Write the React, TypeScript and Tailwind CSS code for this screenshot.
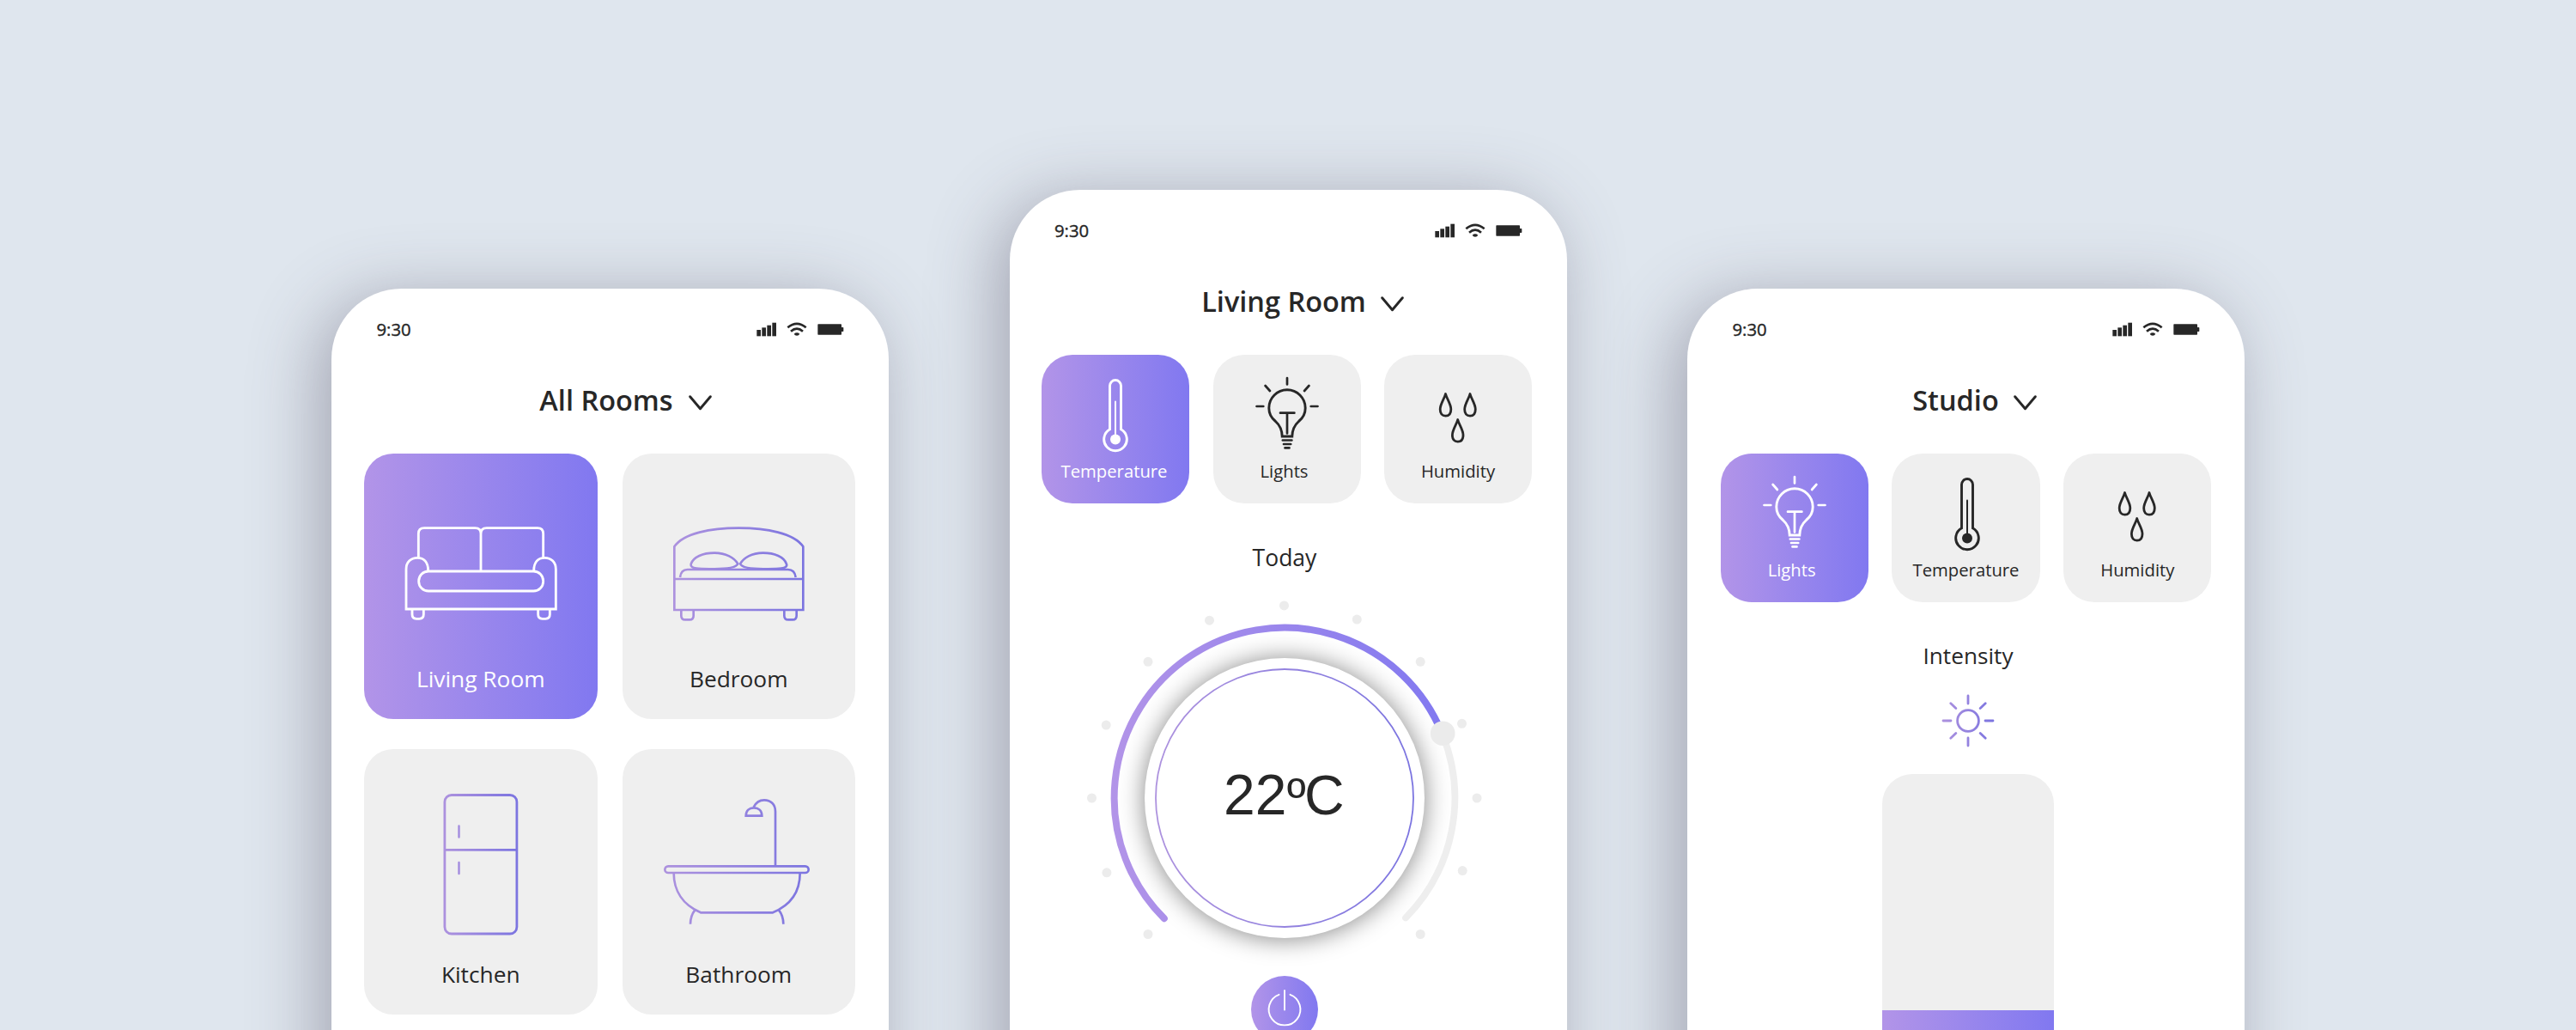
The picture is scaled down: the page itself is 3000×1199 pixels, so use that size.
import type { ReactNode } from "react";

const INK = "#272727";

function Gradient({ id, x1, x2, soft }: { id: string; x1: number; x2: number; soft?: boolean }) {
  return (
    <defs>
      <linearGradient id={id} gradientUnits="userSpaceOnUse" x1={x1} x2={x2} y1="0" y2="0">
        <stop offset="0" stopColor={soft ? "#ad92de" : "#b294e8"} />
        <stop offset="1" stopColor={soft ? "#7b74e0" : "#8178f0"} />
      </linearGradient>
    </defs>
  );
}

function StatusIcons() {
  return (
    <svg width="102" height="19" viewBox="33 40 306 57" fill={INK}>
      <rect x="34" y="70" width="14" height="22" />
      <rect x="52" y="62" width="14" height="30" />
      <rect x="70" y="54" width="14" height="38" />
      <rect x="88" y="45" width="14" height="47" />
      <g fill="none" stroke={INK} strokeWidth="8">
        <path d="M142 62 Q174 35 206 62" />
        <path d="M153 75 Q174 57 195 75" />
      </g>
      <path d="M164 84 Q174 76 184 84 L180 89 Q174 91 168 89 Z" />
      <rect x="247" y="50" width="83" height="37" rx="2" />
      <rect x="329" y="61" width="8" height="15" rx="2" />
    </svg>
  );
}

function Chevron() {
  return (
    <svg width="27" height="18" viewBox="0 0 27 18" fill="none" stroke={INK} strokeWidth="2.900" strokeLinecap="round" strokeLinejoin="round">
      <path d="M1.700 1.700 L13.500 15.800 L25.300 1.700" />
    </svg>
  );
}

function Sofa() {
  return (
    <svg width="200" height="150" viewBox="0 0 600 450" fill="none" stroke="white" strokeWidth="8.500">
      <path d="M82 176 V94 Q82 74 102 74 H280 Q300 74 300 94 V224 M300 94 Q300 74 320 74 H498 Q518 74 518 94 V176" />
      <path d="M116 224 C116 192 100 178 78 178 C56 178 39 192 39 218 V357 H562 V218 C562 192 545 178 523 178 C501 178 485 192 485 224" />
      <rect x="83" y="225" width="435" height="69" rx="34" />
      <path d="M60 357 V376 Q60 391 75 391 H85 Q100 391 100 376 V357 M500 357 V376 Q500 391 515 391 H526 Q541 391 541 376 V357" />
    </svg>
  );
}

function Bed() {
  return (
    <svg width="180" height="130" viewBox="0 0 540 390" fill="none" stroke="url(#bed)" strokeWidth="8">
      <Gradient id="bed" x1={40} x2={500} soft />
      <path d="M46 330 V109 C78 62 174 44 271 44 C368 44 464 62 496 109 V330 Z" />
      <path d="M46 222 H496" />
      <path d="M66 216 C68 200 76 189 92 189 H443 C459 189 468 200 470 216" />
      <path d="M104 170 C112 145 146 131 186 131 C226 131 256 148 268 169 C262 183 230 187 186 187 C142 187 100 189 104 170 Z" />
      <path d="M438 170 C430 145 396 131 356 131 C316 131 288 148 276 169 C282 183 312 187 356 187 C400 187 444 189 438 170 Z" />
      <path d="M70 332 V350 Q70 364 84 364 H99 Q113 364 113 350 V332 M430 332 V350 Q430 364 444 364 H459 Q473 364 473 350 V332" />
    </svg>
  );
}

function Fridge() {
  return (
    <svg width="100" height="170" viewBox="0 0 100 170" fill="none" stroke="url(#fridge)" strokeWidth="2.800">
      <Gradient id="fridge" x1={6} x2={94} soft />
      <rect x="7.900" y="5.500" width="84" height="161.500" rx="8" />
      <path d="M8 69.300 H92" />
      <path d="M24.500 41.500 V54.500 M24.500 84 V97" strokeLinecap="round" strokeWidth="2.400" />
    </svg>
  );
}

function Bath() {
  return (
    <svg width="200" height="170" viewBox="0 0 600 510" fill="none" stroke="url(#bath)" strokeWidth="8">
      <Gradient id="bath" x1={40} x2={550} soft />
      <rect x="43" y="265" width="502" height="23" rx="11.500" />
      <path d="M74 289 C74 350 105 400 168 427 H420 C485 400 515 350 515 289" />
      <path d="M148 418 C137 432 132 448 132 467 M441 418 C452 432 457 448 457 467" />
      <path d="M429 263 V74 C429 48 412 34 390 34 C370 34 360 44 353 59" />
      <path d="M326 89 C326 71 338 61 354 61 C370 61 382 71 382 89 Z" />
    </svg>
  );
}

function Thermometer() {
  return (
    <svg width="80" height="100" viewBox="0 0 80 100" fill="none" stroke="currentColor" strokeWidth="2.900">
      <path d="M33.500 69.800 V19 a6.500 6.500 0 0 1 13 0 V69.800 a13.300 13.300 0 1 1 -13 0 Z" />
      <path d="M40 37.500 V80" strokeWidth="2" strokeLinecap="round" />
      <circle cx="40" cy="81.500" r="6" fill="currentColor" stroke="none" />
    </svg>
  );
}

function Bulb() {
  return (
    <svg width="80" height="100" viewBox="0 0 80 100" fill="none" stroke="currentColor" strokeWidth="2.900">
      <path d="M34.200 78 H45.800 C46 70 49 64.500 53.500 60.500 C58.500 56.500 61.200 50.500 61.200 45 A21.200 21.200 0 0 0 18.800 45 C18.800 50.500 21.500 56.500 26.500 60.500 C31 64.500 34 70 34.200 78 Z" />
      <g strokeLinecap="round" strokeWidth="2.700">
        <path d="M32 50.700 H48.400 M40 51 V74.500" />
        <path d="M34.800 82.500 H45.400 M36 87 H44.200 M37.500 91.400 H42.500" />
        <path d="M40 10 V17.500 M4.500 43 H12.300 M67.700 43 H75.500 M14.600 19 L19.900 25 M65.400 19 L60.100 25" />
      </g>
    </svg>
  );
}

function Drops() {
  const drop = "M0 2.500 C1.500 8.500 6.300 14 6.300 20.500 C6.300 25.500 4 28.200 0 28.200 C-4 28.200 -6.300 25.500 -6.300 20.500 C-6.300 14 -1.500 8.500 0 2.500 Z";
  return (
    <svg width="80" height="100" viewBox="0 0 80 100" fill="none" stroke="currentColor" strokeWidth="2.800" strokeLinejoin="round">
      <path d={drop} transform="translate(25.500 26)" />
      <path d={drop} transform="translate(54 26)" />
      <path d={drop} transform="translate(39.700 56)" />
    </svg>
  );
}

function Sun() {
  return (
    <svg width="64" height="64" viewBox="-32 -32 64 64" fill="none" stroke="url(#sun)" strokeWidth="2.800" strokeLinecap="round">
      <Gradient id="sun" x1={-30} x2={30} soft />
      <circle r="12.400" />
      <path d="M0 -29 V-20 M0 20 V29 M-29 0 H-20 M20 0 H29 M-20.200 -20.200 L-14.200 -14.500 M20.200 -20.200 L14.200 -14.500 M-20.200 20.200 L-14.200 14.500 M20.200 20.200 L14.200 14.500" />
    </svg>
  );
}

const ticks = [
  [-159, 158.5], [-207.1, 86.8], [-224.5, 0], [-207.8, -84.9], [-159, -158.7], [-87.5, -206.8], [-0.5, -224.1],
  [84.3, -207.9], [158.2, -158.7], [206.5, -86.7], [224, 0], [207.2, 84.6], [158.2, 158.5],
];

function Dial() {
  return (
    <svg width="480" height="420" viewBox="-240 -240 480 420" fill="none" className="overflow-visible">
      <Gradient id="dial" x1={-200} x2={190} />
      <Gradient id="ring" x1={-150} x2={150} soft />
      <defs>
        <filter id="dialShadow" x="-50%" y="-50%" width="200%" height="200%">
          <feGaussianBlur stdDeviation="14" />
        </filter>
      </defs>
      <circle cy="1" r="164" fill="#000" fillOpacity="0.450" filter="url(#dialShadow)" />
      <circle r="163" fill="white" />
      <circle r="150" stroke="url(#ring)" strokeWidth="1.800" />
      {ticks.map(([x, y]) => (
        <circle key={`${x},${y}`} cx={x} cy={y} r="5.500" fill="#ececec" />
      ))}
      <path d="M183.600 -74.900 A198.300 198.300 0 0 1 141 139.400" stroke="#eeeeee" strokeWidth="7.800" strokeLinecap="round" />
      <path d="M-140.200 140.200 A198.300 198.300 0 1 1 183.600 -74.900" stroke="url(#dial)" strokeWidth="8" strokeLinecap="round" />
      <circle cx="184.200" cy="-75.300" r="14.300" fill="#ebebeb" />
      <text x="-71" y="19.200" fontSize="66" fill={INK} fontFamily="'Liberation Sans', sans-serif">
        22<tspan x="2.800" fontSize="60">º</tspan><tspan x="23" fontSize="64.500">C</tspan>
      </text>
    </svg>
  );
}

function Power() {
  return (
    <div className="flex h-[78px] w-[78px] items-center justify-center rounded-full bg-linear-to-r from-[#b294e8] to-[#8178f0]">
      <svg width="50" height="50" viewBox="-25 -25 50 50" fill="none" stroke="white" strokeWidth="1.900" strokeLinecap="round">
        <path d="M-6.500 -17.200 A18.400 18.400 0 1 0 6.500 -17.200" />
        <path d="M0 -22 V0.500" />
      </svg>
    </div>
  );
}

function Phone({ title, titleClass, className, children }: { title: string; titleClass: string; className: string; children: ReactNode }) {
  return (
    <section className={`flex h-[1300px] w-[649px] shrink-0 flex-col rounded-t-[82px] bg-white shadow-[-14px_12px_80px_rgba(90,86,106,0.45)] ${className}`}>
      <div className="flex h-[107px] items-start justify-between pt-[32px] pr-[52px] pl-[52.500px]">
        <span className="text-[20.300px] leading-[30px] font-medium [-webkit-text-stroke:0.400px_#272727]">9:30</span>
        <span className="pt-[6px]">
          <StatusIcons />
        </span>
      </div>
      <div className={`flex h-[85px] items-start justify-center ${titleClass}`}>
        <h2 className="pt-px text-[32.500px] leading-[44px] font-semibold">{title}</h2>
        <span className="pt-[17px]">
          <Chevron />
        </span>
      </div>
      {children}
    </section>
  );
}

function RoomCard({ label, active, iconClass, children }: { label: string; active?: boolean; iconClass: string; children: ReactNode }) {
  const tone = active ? "bg-linear-to-r from-[#b294e8] to-[#8178f0] text-white" : "bg-[#efefef]";
  return (
    <div className={`flex h-[309px] flex-col items-center rounded-[34px] ${tone}`}>
      <div className={`h-[244px] ${iconClass}`}>{children}</div>
      <span className="text-[26.300px] leading-[36px]">{label}</span>
    </div>
  );
}

function Tile({ label, active, iconClass = "", labelClass = "", children }: { label: string; active?: boolean; iconClass?: string; labelClass?: string; children: ReactNode }) {
  const tone = active ? "bg-linear-to-r from-[#b294e8] to-[#8178f0] text-white" : "bg-[#efefef]";
  return (
    <div className={`flex h-[173px] flex-col items-center rounded-[36px] pt-[17px] ${tone}`}>
      <div className={`h-[103px] ${iconClass}`}>{children}</div>
      <span className={`text-[20.300px] leading-[30px] ${labelClass}`}>{label}</span>
    </div>
  );
}

export default function App() {
  return (
    <main className="flex h-[1199px] w-[3000px] items-start gap-[140.500px] overflow-hidden bg-[#dfe6ee] pl-[386px] font-['Open_Sans',sans-serif] text-[#272727]">
      <Phone title="All Rooms" titleClass="gap-[18px] pl-[36px]" className="mt-[336px]">
        <div className="grid grid-cols-2 gap-x-[29px] gap-y-[35px] pr-[39px] pl-[38px]">
          <RoomCard label="Living Room" active iconClass="pt-[62px]">
            <Sofa />
          </RoomCard>
          <RoomCard label="Bedroom" iconClass="pt-[72px] pr-px">
            <Bed />
          </RoomCard>
          <RoomCard label="Kitchen" iconClass="pt-[48px]">
            <Fridge />
          </RoomCard>
          <RoomCard label="Bathroom" iconClass="pt-[48px]">
            <Bath />
          </RoomCard>
        </div>
      </Phone>

      <Phone title="Living Room" titleClass="gap-[17px] pl-[34px]" className="mt-[221px]">
        <div className="grid grid-cols-3 gap-[27.500px] pr-[40.500px] pl-[37.500px]">
          <Tile label="Temperature" active labelClass="pr-[3px]">
            <Thermometer />
          </Tile>
          <Tile label="Lights" labelClass="pr-[6px]">
            <Bulb />
          </Tile>
          <Tile label="Humidity">
            <Drops />
          </Tile>
        </div>
        <div className="flex flex-col items-center pt-[44px] pr-[8px]">
          <h3 className="pt-px text-[26.500px] leading-[36px]">Today</h3>
          <div className="pt-[22px]">
            <Dial />
          </div>
          <div className="pt-[27px]">
            <Power />
          </div>
        </div>
      </Phone>

      <Phone title="Studio" titleClass="gap-[17px] pl-[20px]" className="mt-[336px]">
        <div className="grid grid-cols-3 gap-[27.500px] px-[38.500px]">
          <Tile label="Lights" active labelClass="pr-[6px]">
            <Bulb />
          </Tile>
          <Tile label="Temperature" iconClass="pl-[4px]">
            <Thermometer />
          </Tile>
          <Tile label="Humidity">
            <Drops />
          </Tile>
        </div>
        <div className="flex flex-col items-center pt-[44px] pl-[5px]">
          <h3 className="text-[26.200px] leading-[36px]">Intensity</h3>
          <div className="pt-[26px]">
            <Sun />
          </div>
          <div className="mt-[30px] flex h-[400px] w-[200px] flex-col justify-end overflow-hidden rounded-[35px] bg-[#efefef]">
            <div className="h-[125px] bg-linear-to-r from-[#b294e8] to-[#8178f0]" />
          </div>
        </div>
      </Phone>
    </main>
  );
}
